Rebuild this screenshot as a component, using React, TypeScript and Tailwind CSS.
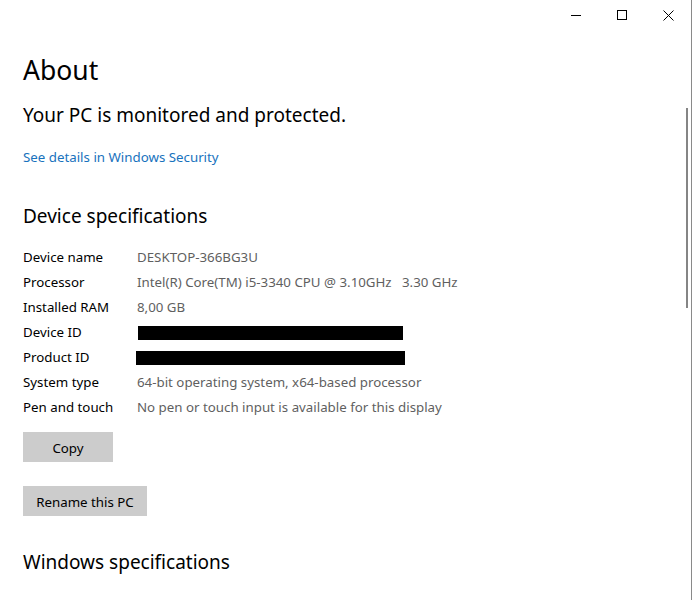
import React from 'react';

const specs: { label: string; value?: string; redact?: string }[] = [
  { label: 'Device name', value: 'DESKTOP-366BG3U' },
  { label: 'Processor', value: 'Intel(R) Core(TM) i5-3340 CPU @ 3.10GHz   3.30 GHz' },
  { label: 'Installed RAM', value: '8,00 GB' },
  { label: 'Device ID', redact: 'ml-[1px] w-[265px]' },
  { label: 'Product ID', redact: 'ml-[-1px] w-[269px]' },
  { label: 'System type', value: '64-bit operating system, x64-based processor' },
  { label: 'Pen and touch', value: 'No pen or touch input is available for this display' },
];

function TitleButton({ children }: { children: React.ReactNode }) {
  return (
    <button className="flex h-[30px] w-[46px] items-center justify-center text-black hover:bg-[#e5e5e5]">
      {children}
    </button>
  );
}

export default function App() {
  return (
    <div
      className="flex h-[600px] w-[694px] overflow-hidden bg-white"
      style={{ fontFamily: '"Noto Sans", "Open Sans", sans-serif' }}
    >
      <div className="relative h-full w-[692px] border-r border-[#8a8a8a]">
        {/* Title bar */}
        <div className="flex h-[30px] justify-end">
          <TitleButton>
            <svg width="10" height="10" viewBox="0 0 10 10">
              <path d="M0 5.5h10" stroke="currentColor" strokeWidth="1" />
            </svg>
          </TitleButton>
          <TitleButton>
            <svg width="10" height="10" viewBox="0 0 10 10">
              <rect x="0.5" y="0.5" width="9" height="9" fill="none" stroke="currentColor" strokeWidth="1" />
            </svg>
          </TitleButton>
          <TitleButton>
            <svg width="11" height="11" viewBox="0 0 11 11">
              <path d="M0.5 0.5l10 10M10.5 0.5l-10 10" stroke="currentColor" strokeWidth="1" />
            </svg>
          </TitleButton>
        </div>

        {/* Scrollbar thumb */}
        <div className="absolute left-[686px] top-[108px] h-[200px] w-[2px] bg-[#858585]" />

        {/* Content */}
        <div className="pl-[23px] text-black">
          <h1 className="mt-[22px] text-[26.5px] leading-[36px] font-normal">About</h1>
          <p className="mt-[13px] text-[19px] leading-[28px]">Your PC is monitored and protected.</p>
          <a href="#" className="mt-[18px] block text-[13.3px] leading-[20px] text-[#1872bd]">
            See details in Windows Security
          </a>

          <h2 className="mt-[35px] text-[19px] leading-[28px] font-normal">Device specifications</h2>

          <div className="mt-[15px]">
            {specs.map((s) => (
              <div key={s.label} className="flex h-[25px] items-center text-[13.3px] leading-[25px]">
                <span className="w-[114px] shrink-0">{s.label}</span>
                {s.redact ? (
                  <span className={`block h-[14px] bg-black ${s.redact}`} />
                ) : (
                  <span className="whitespace-pre text-[#5f5f5f]">{s.value}</span>
                )}
              </div>
            ))}
          </div>

          <button className="mt-[12px] block h-[30px] w-[90px] bg-[#cccccc] pt-[3px] text-[13.3px] text-black">
            Copy
          </button>
          <button className="mt-[24px] block h-[30px] w-[124px] bg-[#cccccc] pt-[3px] text-[13.3px] text-black">
            Rename this PC
          </button>

          <h2 className="mt-[32px] text-[19px] leading-[28px] font-normal">Windows specifications</h2>
        </div>
      </div>
    </div>
  );
}
